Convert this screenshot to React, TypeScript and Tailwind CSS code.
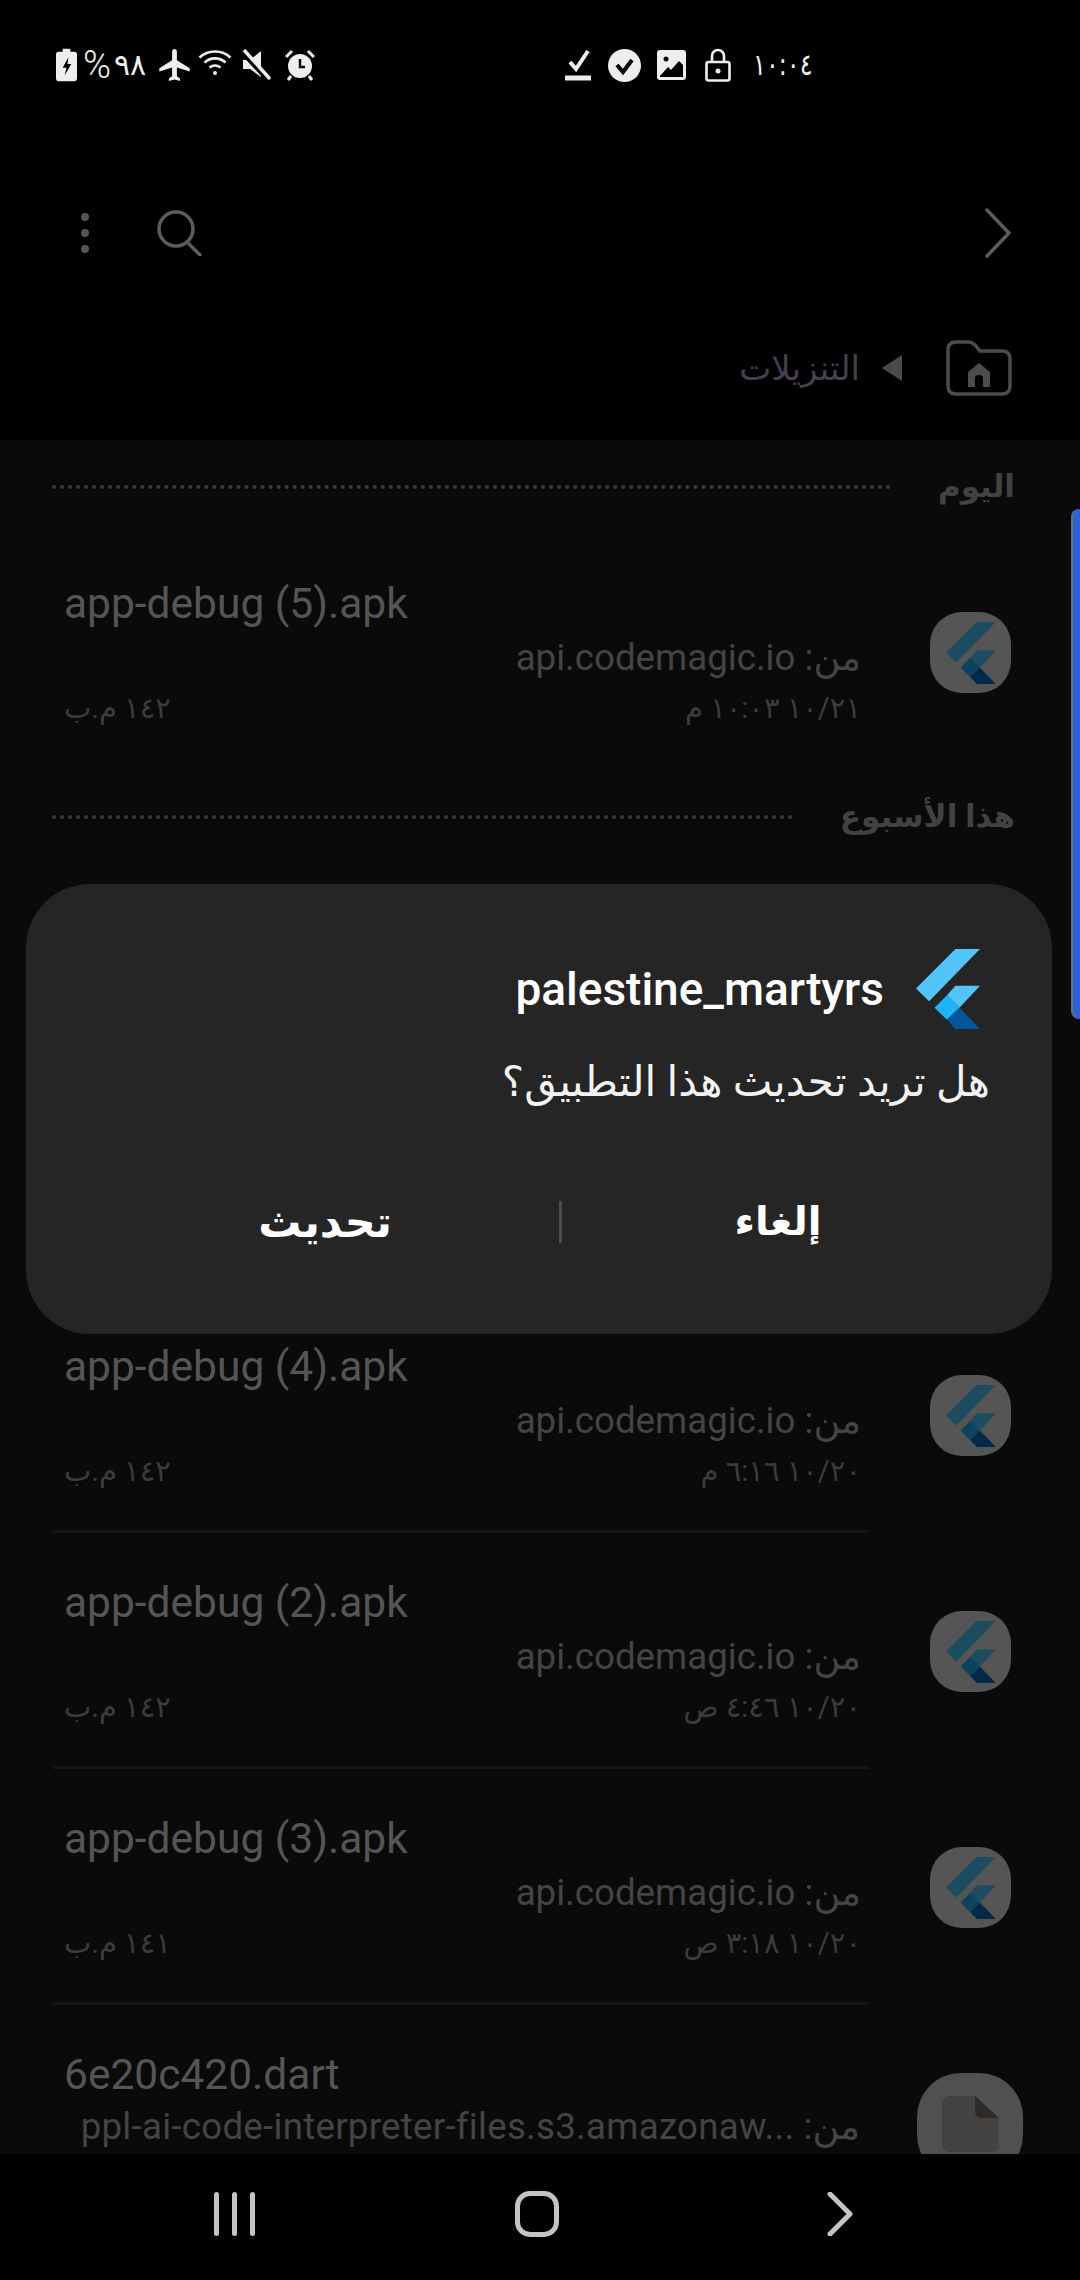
const sans = 'font-["Roboto","DejaVu_Sans",sans-serif]';

function FlutterLogo({ dim, className }: { dim?: boolean; className: string }) {
  return (
    <svg viewBox="108 88 190 237" className={className}>
      <path d="M225 88H298L147 243L108 205Z" fill={dim ? '#1d4b60' : '#54c5f8'} />
      <path d="M225 197H298L237 262L200 225Z" fill={dim ? '#1d4b60' : '#54c5f8'} />
      <path d="M163 262L200 225L237 262L200 298Z" fill={dim ? '#0b435c' : '#1fb3f8'} />
      <path d="M200 298L237 262L298 325H225Z" fill={dim ? '#02294a' : '#01579b'} />
    </svg>
  );
}

function StatusBar() {
  return (
    <div dir="ltr" className="flex h-[130px] items-center text-[#eeeeee]">
      <svg viewBox="0 0 22 34" className="ml-[56px] h-[34px] w-[21px]">
        <path d="M7 0h8v3h4q3 0 3 3v25q0 3-3 3H3q-3 0-3-3V6q0-3 3-3h4z" fill="#eee" />
        <path d="M13 9l-6 11h4l-2 8 7-12h-4z" fill="#000" />
      </svg>
      <span className="ml-[6px] w-[28px] text-center font-['Roboto',sans-serif] text-[38px] font-light leading-none">%</span>
      <span className="ml-[2px] w-[34px] text-center font-['DejaVu_Sans',sans-serif] text-[30px] leading-none">٩٨</span>
      <svg viewBox="2 2 19 20" className="ml-[12px] h-[32px] w-[31px]" fill="#eee">
        <path d="M21 16v-2l-8-5V3.5c0-.83-.67-1.5-1.5-1.5S10 2.67 10 3.5V9l-8 5v2l8-2.5V19l-2 1.5V22l3.5-1 3.5 1v-1.5L13 19v-5.5l8 2.5z" />
      </svg>
      <svg viewBox="0 0 34 28" className="ml-[8px] h-[28px] w-[34px] -translate-y-[3px]" fill="none" stroke="#eee" strokeWidth="2.6">
        <path d="M1.5 9.5C10 1.5 24 1.5 32.500 9.500" />
        <path d="M6.500 14.500C12.500 9 21.500 9 27.500 14.500" />
        <path d="M11.500 19.500C15 17 19 17 22.500 19.500" />
        <circle cx="17" cy="25" r="2" fill="#eee" stroke="none" />
      </svg>
      <svg viewBox="0 0 30 32" className="ml-[9px] h-[32px] w-[30px]">
        <path d="M2 11h7l11-9v26l-11-8H2z" fill="#eee" />
        <path d="M1 2l27 29" stroke="#000" strokeWidth="6" />
        <path d="M3 1l26 29" stroke="#eee" strokeWidth="3.500" />
      </svg>
      <svg viewBox="0 0 30 32" className="ml-[14px] h-[32px] w-[30px]">
        <circle cx="15" cy="17" r="12" fill="#eee" />
        <path d="M15 10v8h5" fill="none" stroke="#000" strokeWidth="2.400" />
        <path d="M1 8l6-6M29 8l-6-6M6 27l-3 4M24 27l3 4" stroke="#eee" strokeWidth="3" />
      </svg>
      <svg viewBox="0 0 26 32" className="ml-[250px] h-[32px] w-[26px]" fill="none" stroke="#eee">
        <path d="M5 13l6 7L23 2" strokeWidth="4" />
        <path d="M0 29h26" strokeWidth="5" />
      </svg>
      <svg viewBox="0 0 33 33" className="ml-[17px] h-[33px] w-[33px]">
        <circle cx="16.500" cy="16.500" r="16.500" fill="#eee" />
        <path d="M9 16l6 7L24 11" fill="none" stroke="#000" strokeWidth="4" />
      </svg>
      <svg viewBox="0 0 29 30" className="ml-[16px] h-[30px] w-[29px]">
        <rect x="0" y="0" width="29" height="30" rx="3" fill="#eee" />
        <rect x="3" y="3" width="23" height="24" fill="#000" />
        <path d="M3 3h23v12l-4-4-8 9-3-3-8 9z" fill="#eee" />
        <circle cx="9" cy="9" r="2.500" fill="#000" />
      </svg>
      <svg viewBox="0 0 26 34" className="ml-[19px] h-[34px] w-[26px]" fill="none" stroke="#eee" strokeWidth="2.600">
        <path d="M7 14V8a6 6 0 0 1 12 0v6" />
        <rect x="1.500" y="14" width="23" height="18.500" rx="2" />
        <circle cx="13" cy="23" r="2.500" fill="#eee" stroke="none" />
      </svg>
      <span className="ml-[22px] origin-left scale-x-[0.8] font-['DejaVu_Sans',sans-serif] text-[30px] leading-none">١٠:٠٤</span>
    </div>
  );
}

function TopBar() {
  return (
    <div dir="ltr" className="flex h-[310px] flex-col bg-black">
      <div className="mt-[73px] flex h-[60px] items-center justify-between pl-[81px] pr-[68px]">
        <div className="flex items-center gap-[68px]">
          <div className="flex flex-col gap-[8px]">
            <div className="h-[8px] w-[8px] rounded-full bg-[#545454]" />
            <div className="h-[8px] w-[8px] rounded-full bg-[#545454]" />
            <div className="h-[8px] w-[8px] rounded-full bg-[#545454]" />
          </div>
          <svg viewBox="0 0 46 46" className="h-[46px] w-[46px]" fill="none" stroke="#5c5c5c" strokeWidth="3.500">
            <circle cx="19" cy="19" r="17" />
            <path d="M30 32l13 13" strokeLinecap="round" />
          </svg>
        </div>
        <svg viewBox="0 0 28 50" className="h-[50px] w-[28px]" fill="none" stroke="#5c5c5c" strokeWidth="3.500">
          <path d="M3 2l22 23L3 48" strokeLinecap="round" strokeLinejoin="round" />
        </svg>
      </div>
      <div dir="rtl" className="mt-[77px] flex h-[56px] items-center pr-[68px]">
        <svg viewBox="0 0 66 56" className="h-[56px] w-[66px]" fill="none" stroke="#4c4c4c" strokeWidth="3.500">
          <path d="M2 10q0-8 8-8h12q4 0 7 3l5 6h22q8 0 8 8v27q0 8-8 8H10q-8 0-8-8z" />
          <path d="M33 23l-11 9v15h7v-9q0-3 4-3t4 3v9h7V32z" fill="#4c4c4c" stroke="none" />
        </svg>
        <svg viewBox="0 0 20 26" className="mr-[44px] h-[26px] w-[20px]">
          <path d="M20 0v26L0 13z" fill="#4a4a4a" />
        </svg>
        <span className={`mr-[22px] ${sans} text-[34px] leading-none text-[#463f4e]`}>التنزيلات</span>
      </div>
    </div>
  );
}

function SectionHeader({ label }: { label: string }) {
  return (
    <div className="flex h-[94px] items-center gap-[47px] pl-[52px] pr-[65px]">
      <span className={`${sans} text-[31px] font-bold text-[#424242]`}>{label}</span>
      <div className="flex-1 border-t-[4px] border-dotted border-[#3c3c3c]" />
    </div>
  );
}

type FileRow = { name: string; date: string; size: string };

function ApkRow({ row, divider }: { row: FileRow; divider?: boolean }) {
  return (
    <div className="flex h-[236px] flex-row gap-[61px] pl-[53px] pr-[69px]">
      <div className="mt-[78px] flex h-[81px] w-[81px] shrink-0 items-center justify-center rounded-[32px] bg-[#555555]">
        <FlutterLogo dim className="h-[62px] w-[50px]" />
      </div>
      <div className={`flex-1 pl-[11px] pr-[8px] pt-[45px] ${divider ? 'border-b-[3px] border-[#161616]' : ''}`}>
        <div dir="ltr" className={`mb-[4px] h-[50px] text-left ${sans} text-[42.5px] leading-[50px] text-[#555555]`}>{row.name}</div>
        <div className={`h-[50px] whitespace-nowrap ${sans} text-[36.7px] leading-[50px] text-[#444444]`}>
          من: <bdi dir="ltr">api.codemagic.io</bdi>
        </div>
        <div className={`flex h-[50px] justify-between ${sans} text-[29px] leading-[50px] text-[#3c3c3c]`}>
          <span>{row.date}</span>
          <span>{row.size}</span>
        </div>
      </div>
    </div>
  );
}

function DartRow() {
  return (
    <div className="flex h-[236px] flex-row gap-[61px] pl-[53px] pr-[69px]">
      <div className="-mx-[12px] mt-[68px] flex h-[106px] w-[106px] shrink-0 items-start justify-center rounded-[44px] bg-[#505050] pt-[23px]">
        <svg viewBox="0 0 57 56" className="h-[56px] w-[57px]">
          <path d="M8 0H33L57 22V48q0 8-8 8H8q-8 0-8-8V8q0-8 8-8z" fill="#444240" />
          <path d="M33 0L57 22H40q-7 0-7-7z" fill="#2e2a28" />
        </svg>
      </div>
      <div className="flex-1 pl-[11px] pr-[8px] pt-[45px]">
        <div dir="ltr" className={`mb-[2px] h-[50px] text-left ${sans} text-[42.5px] leading-[50px] text-[#555555]`}>6e20c420.dart</div>
        <div className={`h-[50px] whitespace-nowrap ${sans} text-[36.7px] leading-[50px] tracking-[0.26px] text-[#444444]`}>
          من: <bdi dir="ltr">ppl-ai-code-interpreter-files.s3.amazonaw...</bdi>
        </div>
      </div>
    </div>
  );
}

function UpdateDialog() {
  return (
    <div dir="rtl" className={`absolute left-[26px] top-[884px] h-[450px] w-[1026px] rounded-[64px] bg-[#252525] pt-[65px] ${sans} text-white`}>
      <div className="flex h-[80px] items-center gap-[32px] pr-[72px]">
        <FlutterLogo className="h-[80px] w-[64px]" />
        <span dir="ltr" className="text-[46px] font-medium leading-none">palestine_martyrs</span>
      </div>
      <div className="mt-[23px] h-[60px] pr-[62px] text-[42px] leading-[60px] text-[#f2f2f2]">هل تريد تحديث هذا التطبيق؟</div>
      <div className="mr-[58px] mt-[60px] flex h-[100px] items-center">
        <div className="w-[432px] text-center text-[40px] font-bold">إلغاء</div>
        <div className="h-[42px] w-[3px] bg-[#4c4c4c]" />
        <div className="w-[468px] text-center text-[43px] font-bold">تحديث</div>
      </div>
    </div>
  );
}

function NavBar() {
  return (
    <div dir="ltr" className="flex h-[126px] items-center bg-black pb-[6px]">
      <div className="ml-[214px] flex h-[44px] gap-[13px]">
        <div className="w-[5px] rounded-full bg-[#c4c4c4]" />
        <div className="w-[5px] rounded-full bg-[#c4c4c4]" />
        <div className="w-[5px] rounded-full bg-[#c4c4c4]" />
      </div>
      <div className="ml-[260px] h-[46px] w-[44px] rounded-[15px] border-[5px] border-[#c4c4c4]" />
      <svg viewBox="0 0 26 44" className="ml-[268px] h-[44px] w-[26px]" fill="none" stroke="#c4c4c4" strokeWidth="5">
        <path d="M3 2l20 20L3 42" strokeLinecap="round" strokeLinejoin="round" />
      </svg>
    </div>
  );
}

const todayRow: FileRow = { name: 'app-debug (5).apk', date: '١٠/٢١ ١٠:٠٣ م', size: '١٤٢ م.ب' };
const weekRows: FileRow[] = [
  { name: 'app-debug (4).apk', date: '١٠/٢٠ ٦:١٦ م', size: '١٤٢ م.ب' },
  { name: 'app-debug (2).apk', date: '١٠/٢٠ ٤:٤٦ ص', size: '١٤٢ م.ب' },
  { name: 'app-debug (3).apk', date: '١٠/٢٠ ٣:١٨ ص', size: '١٤١ م.ب' },
];

export default function App() {
  return (
    <div className="relative flex h-[2280px] w-[1080px] flex-col overflow-hidden bg-black">
      <StatusBar />
      <TopBar />
      <div dir="rtl" className="h-[1714px] overflow-hidden bg-[#0a0a0a]">
        <SectionHeader label="اليوم" />
        <ApkRow row={todayRow} />
        <SectionHeader label="هذا الأسبوع" />
        <div className="h-[433px]" />
        {weekRows.map((row) => (
          <ApkRow key={row.name} row={row} divider />
        ))}
        <DartRow />
      </div>
      <NavBar />
      <div className="absolute left-[1071px] top-[509px] h-[510px] w-[9px] rounded-l-[8px] border-l-[2px] border-[#6f6f6f] bg-[#2a62d8]" />
      <UpdateDialog />
    </div>
  );
}
